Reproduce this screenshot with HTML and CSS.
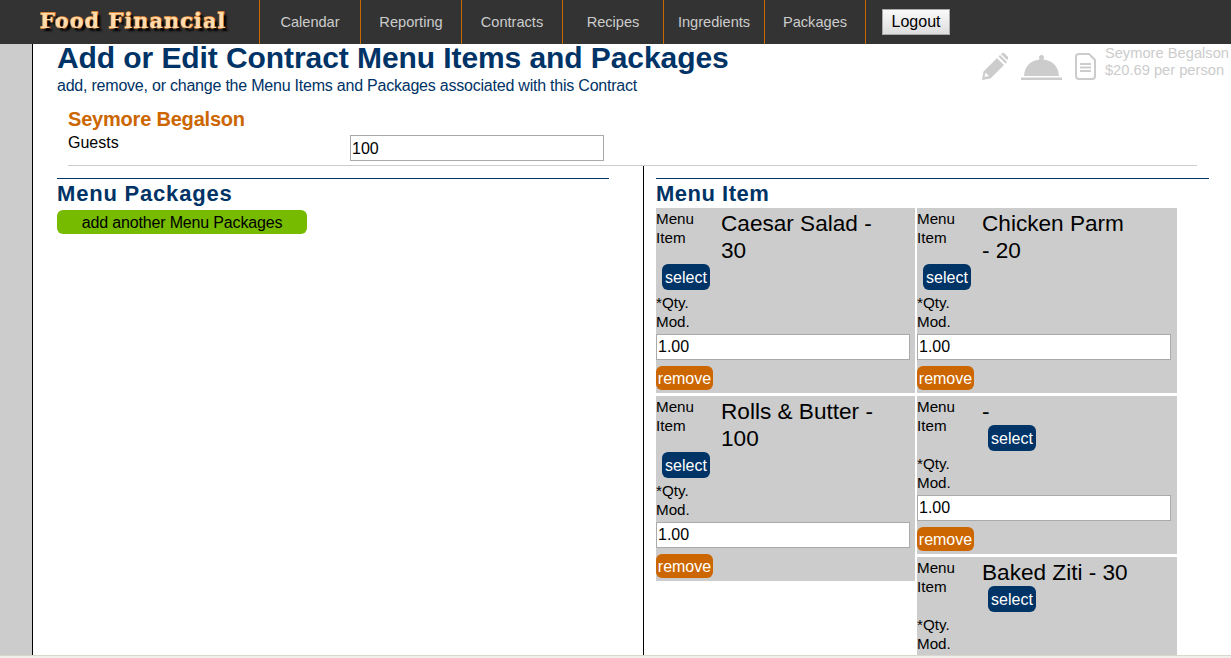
FILE: index.html
```html
<!DOCTYPE html>
<html lang="en">
<head>
<meta charset="utf-8">
<title>Food Financial</title>
<link rel="stylesheet" href="styles.css">
</head>
<body>
<div class="page">
  <header class="topbar">
    <div class="logo">Food Financial</div>
    <nav class="nav">
      <a class="nav-link">Calendar</a>
      <a class="nav-link">Reporting</a>
      <a class="nav-link">Contracts</a>
      <a class="nav-link">Recipes</a>
      <a class="nav-link">Ingredients</a>
      <a class="nav-link">Packages</a>
    </nav>
    <button class="logout">Logout</button>
  </header>
  <div class="shell">
    <aside class="rail"></aside>
    <main class="content">
      <div class="title-row">
        <div class="title-block">
          <h1 class="title">Add or Edit Contract Menu Items and Packages</h1>
          <p class="subtitle">add, remove, or change the Menu Items and Packages associated with this Contract</p>
        </div>
        <div class="status">
          <svg class="icon-pencil" viewBox="0 0 26 27" width="26" height="27"><path fill="#ccc" d="M0 27l1.500-8.500L15 5l7 7L8.500 25.500zM3.500 19.500l-1 4.500 4.500-1z" fill-rule="evenodd"/><path fill="#ccc" d="M16.500 3.500L18 2l7 7-1.500 1.500zM19 1l1-1q1-.5 2 0l4 4q.5 1 0 2l-1 1z"/></svg>
          <svg class="icon-cloche" viewBox="0 0 41 27" width="41" height="27"><path fill="#ccc" d="M18 4.500a2.500 2.500 0 1 1 5 0l-.5 2C32 7.500 37.500 14 38 23H3C3.500 14 9 7.500 18.500 6.500zM0 24.500h41V27H0z"/></svg>
          <svg class="icon-doc" viewBox="0 0 21 27" width="21" height="27"><path fill="none" stroke="#ccc" stroke-width="2" d="M4 1h10l6 6v16a3 3 0 0 1-3 3H4a3 3 0 0 1-3-3V4a3 3 0 0 1 3-3z"/><path fill="none" stroke="#ccc" stroke-width="2" d="M5 11h11M5 14.500h11M5 18h11"/></svg>
          <div class="status-text">Seymore Begalson<br>$20.69 per person</div>
        </div>
      </div>
      <section class="guest-block">
        <h2 class="client">Seymore Begalson</h2>
        <div class="guest-row">
          <label class="guest-label">Guests</label>
          <input class="guest-input" value="100">
        </div>
      </section>
      <div class="columns">
        <section class="col-left">
          <h2 class="col-title col-title-wide">Menu Packages</h2>
          <button class="add-btn">add another Menu Packages</button>
        </section>
        <section class="col-right">
          <h2 class="col-title">Menu Item</h2>
          <div class="cards">
            <div class="card-col">
              <div class="card">
                <div class="head"><div class="item-label">Menu Item</div><div class="item-name">Caesar Salad - 30</div><button class="select">select</button></div>
                <div class="qty-label">*Qty.<br>Mod.</div>
                <input class="qty" value="1.00">
                <button class="remove">remove</button>
              </div>
              <div class="card">
                <div class="head"><div class="item-label">Menu Item</div><div class="item-name">Rolls &amp; Butter - 100</div><button class="select">select</button></div>
                <div class="qty-label">*Qty.<br>Mod.</div>
                <input class="qty" value="1.00">
                <button class="remove">remove</button>
              </div>
            </div>
            <div class="card-col">
              <div class="card">
                <div class="head"><div class="item-label">Menu Item</div><div class="item-name">Chicken Parm - 20</div><button class="select">select</button></div>
                <div class="qty-label">*Qty.<br>Mod.</div>
                <input class="qty" value="1.00">
                <button class="remove">remove</button>
              </div>
              <div class="card">
                <div class="head"><div class="item-label">Menu Item</div><div class="item-name">-</div><button class="select">select</button></div>
                <div class="qty-label">*Qty.<br>Mod.</div>
                <input class="qty" value="1.00">
                <button class="remove">remove</button>
              </div>
              <div class="card">
                <div class="head"><div class="item-label">Menu Item</div><div class="item-name">Baked Ziti - 30</div><button class="select">select</button></div>
                <div class="qty-label">*Qty.<br>Mod.</div>
              </div>
            </div>
          </div>
        </section>
      </div>
    </main>
  </div>
  <div class="strip"></div>
</div>
</body>
</html>
```
FILE: styles.css
```css
* { box-sizing: border-box; }
html, body { margin: 0; height: 100%; overflow: hidden; background: #fff; }
body { font: 16px/19px "Liberation Sans", Arial, sans-serif; color: #000; }
.page { display: flex; flex-direction: column; height: 658px; overflow: hidden; }
.topbar { flex: none; display: flex; align-items: center; height: 44px; background: #333; }
.logo { width: 259px; padding: 0 0 2px 40px; font: bold 21px/24px "DejaVu Serif", serif; letter-spacing: .95px; color: #ffdcae; -webkit-text-stroke: 1.6px #f7953c; paint-order: stroke fill; text-shadow: 3px 3px 2px #000; white-space: nowrap; }
.nav { display: flex; align-self: stretch; border-left: 1px solid #c60; }
.nav-link { width: 101px; display: flex; align-items: center; justify-content: center; font-size: 14.6px; color: #ccc; border-right: 1px solid #c60; }
.logout { margin-left: 16px; width: 68px; height: 26px; padding: 0; font: 16px "Liberation Sans", Arial, sans-serif; color: #000; background: linear-gradient(#fafafa, #ddd); border: 1px solid #aaa; }
.shell { flex: 1; min-height: 0; display: flex; }
.rail { flex: none; width: 33px; background: #ccc; border-right: 1px solid #000; }
.content { flex: 1; min-width: 0; display: flex; flex-direction: column; }
.title-row { flex: none; display: flex; justify-content: space-between; padding-left: 24px; height: 52px; }
.title { margin: 0; font: bold 30px/27px "Liberation Sans", Arial, sans-serif; letter-spacing: -.08px; color: #036; }
.subtitle { margin: 5px 0 0; letter-spacing: -.22px; color: #036; }
.status { display: flex; align-items: flex-start; }
.icon-pencil { margin: 9px 13px 0 0; }
.icon-cloche { margin: 9px 13px 0 0; }
.icon-doc { margin: 9px 9px 0 0; }
.status-text { font-size: 14.7px; color: #ccc; line-height: 17px; margin: 1px 2px 0 0; white-space: nowrap; }
.guest-block { flex: none; margin: 12px 34px 0 35px; padding-bottom: 4px; border-bottom: 1px solid #ccc; }
.client { margin: 0; font: bold 20px/23px "Liberation Sans", Arial, sans-serif; letter-spacing: -.2px; color: #c60; }
.guest-row { display: flex; align-items: flex-start; padding-top: 2px; }
.guest-label { width: 282px; }
.guest-input { width: 254px; height: 26px; margin-top: 2px; padding: 2px 1px 0; font: 16px "Liberation Sans", Arial, sans-serif; color: #000; border: 1px solid #aaa; background: #fff; }
.columns { flex: 1; min-height: 0; display: flex; overflow: hidden; }
.col-left { flex: none; width: 610px; padding: 12px 34px 0 24px; }
.col-right { flex: none; width: 566px; border-left: 1px solid #000; padding: 12px 0 0 12px; }
.col-title { margin: 0 0 1px; padding-top: 2px; border-top: 1px solid #036; font: bold 22px/26px "Liberation Sans", Arial, sans-serif; letter-spacing: .5px; color: #036; }
.col-title-wide { margin-bottom: 3px; letter-spacing: .8px; }
.add-btn { display: block; width: 250px; height: 24px; padding: 2px 0 0; font: 16px "Liberation Sans", Arial, sans-serif; letter-spacing: -.16px; color: #000; background: #7b0; border: 0; border-radius: 6px; }
.cards { display: flex; gap: 2px; }
.card-col { flex: none; width: 259px; display: flex; flex-direction: column; gap: 3px; }
.col-right .card-col:last-child { width: 260px; }
.card { background: #ccc; padding: 2px 0 3px; }
.card-col:last-child .card:last-child { flex: 1; }
.head::after { content: ""; display: block; clear: both; }
.item-label { float: left; width: 65px; margin-top: -1px; font-size: 15.2px; }
.item-name { float: left; width: 155px; font-size: 22.6px; line-height: 27px; }
.select { float: left; width: 48px; height: 26px; margin: 0 0 0 6px; padding: 2px 0 0; font: 16px "Liberation Sans", Arial, sans-serif; color: #fff; background: #036; border: 0; border-radius: 6px; }
.qty-label { width: 50px; margin-top: 3px; font-size: 15.2px; }
.qty { display: block; width: 254px; height: 26px; margin-top: 3px; padding: 0 1px; font: 16px "Liberation Sans", Arial, sans-serif; color: #000; border: 1px solid #aaa; background: #fff; }
.remove { display: block; width: 57px; height: 24px; margin-top: 6px; padding: 2px 0 0; font: 16px "Liberation Sans", Arial, sans-serif; color: #fff; background: #c60; border: 0; border-radius: 6px; }
.strip { flex: none; height: 3px; background: #f0f0ea; border-top: 1px solid #d8d8d0; }
```
